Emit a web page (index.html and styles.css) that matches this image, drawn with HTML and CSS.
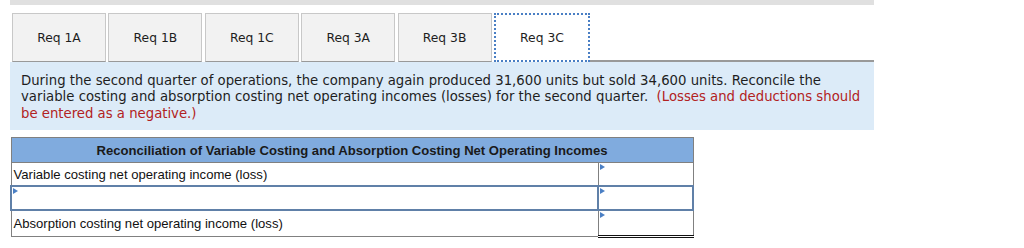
FILE: index.html
```html
<!DOCTYPE html>
<html>
<head>
<meta charset="utf-8">
<link rel="stylesheet" href="styles.css">
</head>
<body>
<div class="wrap">
  <div class="topbar"></div>
  <div class="tabs">
    <div class="tab">Req 1A</div>
    <div class="tab">Req 1B</div>
    <div class="tab">Req 1C</div>
    <div class="tab">Req 3A</div>
    <div class="tab">Req 3B</div>
    <div class="tab active">Req 3C</div>
    <div class="tabfill"></div>
  </div>
  <div class="panel">
    During the second quarter of operations, the company again produced 31,600 units but sold 34,600 units. Reconcile the variable costing and absorption costing net operating incomes (losses) for the second quarter.&nbsp; <span class="note">(Losses and deductions should be entered as a negative.)</span>
  </div>
  <table class="recon">
    <tr><th colspan="2">Reconciliation of Variable Costing and Absorption Costing Net Operating Incomes</th></tr>
    <tr>
      <td class="label">Variable costing net operating income (loss)</td>
      <td class="input"><span class="flag"></span></td>
    </tr>
    <tr>
      <td class="label sel"><span class="flag"></span></td>
      <td class="input sel"><span class="flag"></span></td>
    </tr>
    <tr>
      <td class="label">Absorption costing net operating income (loss)</td>
      <td class="input total"><span class="flag"></span></td>
    </tr>
  </table>
</div>
</body>
</html>
```

FILE: styles.css
```css
html, body { margin: 0; padding: 0; background: #fff; }
.wrap { margin-left: 10px; width: 864px; font-family: "DejaVu Sans", Verdana, sans-serif; color: #1e1e1e; }
.topbar { height: 5px; background: #e0e0e0; }
.tabs { display: flex; margin-top: 8px; padding-left: 2px; height: 49px; }
.tab {
  box-sizing: border-box; width: 94px; height: 49px; margin-right: 2.4px;
  background: #f2f2f2; border: 1px solid #c8c8c8; border-bottom: 1px solid #999;
  display: flex; align-items: center; justify-content: center;
  font-size: 12.3px; color: #1e1e1e;
}
.tab.active {
  width: 96px; margin-right: 0; background: #fff;
  border: 2px dotted #4a7fc4; border-bottom: 2px dotted #4a7fc4;
}
.tabfill { flex: 1; border-bottom: 2px solid #999; height: 47px; }
.panel {
  background: #dcebf8; padding: 11px 11px 6px 11px; height: 51px;
  font-size: 13.25px; line-height: 16.3px;
}
.note { color: #b22222; }
.recon {
  margin-top: 7px; width: 684px; border-collapse: collapse;
  font-family: "Liberation Sans", Arial, sans-serif; font-size: 13.1px; color: #111;
  border: 1px solid #808080;
}
.recon th {
  background: #80abde; height: 24px; padding: 0; font-weight: bold; text-align: center;
  border: 1px solid #808080; color: #1a1a1a;
}
.recon td { height: 22px; padding: 0 0 0 2px; border: 1px solid #808080; position: relative; }
.recon td.input { width: 93px; padding: 0; }
.recon td.sel { border: 2px solid #6080a8; }
.recon td.total { border-bottom: 3px double #111; }
.recon tr:last-child td { height: 24px; }
.flag {
  position: absolute; left: 1px; top: 1px; width: 0; height: 0;
  border-top: 3px solid transparent; border-bottom: 3px solid transparent; border-left: 5px solid #4a7fc4;
}
```
